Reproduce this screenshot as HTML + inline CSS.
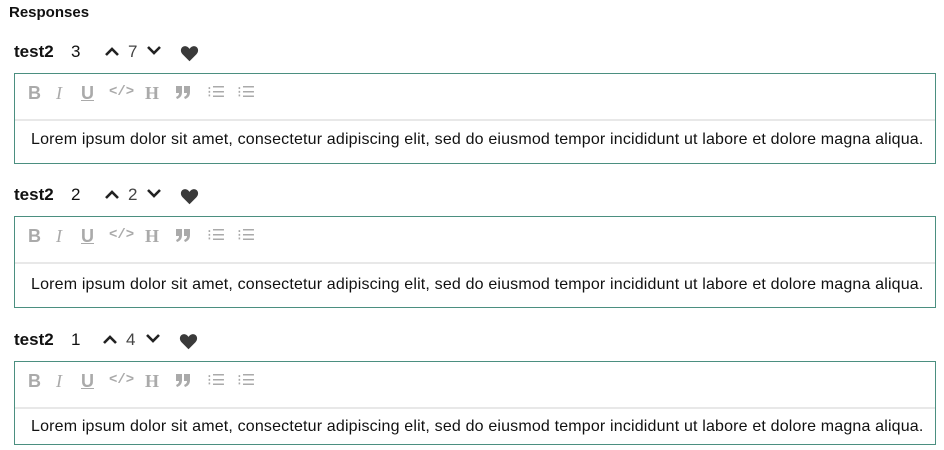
<!DOCTYPE html>
<html><head><style>
body{margin:0;width:944px;height:450px;background:#fff;font-family:"Liberation Sans",sans-serif;color:#111;position:relative;overflow:hidden}
.h{position:absolute;left:9px;top:4px;font-size:15px;font-weight:bold}
.row{position:absolute;left:0;width:944px;height:20px}
.row span{position:absolute;top:0;font-size:17px;line-height:20px}
.name{left:14px;font-weight:bold}
.box{position:absolute;left:14px;width:922px;border:1px solid #4b8f80;box-sizing:border-box}
.tb{position:absolute;left:0;top:0;right:0;height:45px;border-bottom:2px solid #e8e8e8}
.tb span{position:absolute;top:9px;font-size:18px;color:#aaa;font-weight:bold;font-family:"Liberation Serif",serif}
.txt{position:absolute;left:16px;font-size:16px;letter-spacing:0.17px;line-height:20px;color:#111;white-space:nowrap}
svg{position:absolute}
</style></head><body>
<div class="h">Responses</div>

<div class="row" style="top:42px">
<span class="name">test2</span><span style="left:71px">3</span>
<svg style="left:104px;top:3px" width="16" height="12" viewBox="0 0 16 12"><path d="M2 10L8 4l6 6" stroke="#222" stroke-width="2.6" fill="none"/></svg>
<span style="left:128px;color:#444">7</span>
<svg style="left:146px;top:2px" width="16" height="12" viewBox="0 0 16 12"><path d="M2 3l6 6 6-6" stroke="#222" stroke-width="2.6" fill="none"/></svg>
<svg style="left:180px;top:3px" width="19" height="17" viewBox="0 0 24 22"><path d="M12 21L3 12C0 9 0 4 4 2c3-1.5 6 0 8 3 2-3 5-4.5 8-3 4 2 4 7 1 10z" fill="#3a3a3a"/></svg>
</div>
<div class="box" style="top:73px;height:91px"><div class="tb">
<span style="left:13px;font-family:'Liberation Sans'">B</span><span style="left:41px;font-style:italic;font-weight:normal">I</span><span style="left:66px;text-decoration:underline;font-family:'Liberation Sans'">U</span><span style="left:94px;font-size:14px;top:10px;font-family:'Liberation Mono'">&lt;/&gt;</span><span style="left:130px">H</span>
<svg style="left:161px;top:12px" width="15" height="13" viewBox="0 0 15 13"><path d="M0 0h6v6c0 4-2 6-5 7l-1-2c2-1 3-2 3-4H0z M8 0h6v6c0 4-2 6-5 7l-1-2c2-1 3-2 3-4H8z" fill="#aaa"/></svg>
<span style="left:192px;font-size:15px;font-family:'Liberation Sans';font-weight:normal">⁝☰</span><span style="left:222px;font-size:15px;font-family:'Liberation Sans';font-weight:normal">⁝☰</span>
</div><div class="txt" style="top:56px">Lorem ipsum dolor sit amet, consectetur adipiscing elit, sed do eiusmod tempor incididunt ut labore et dolore magna aliqua.</div></div>

<div class="row" style="top:185px">
<span class="name">test2</span><span style="left:71px">2</span>
<svg style="left:104px;top:3px" width="16" height="12" viewBox="0 0 16 12"><path d="M2 10L8 4l6 6" stroke="#222" stroke-width="2.6" fill="none"/></svg>
<span style="left:128px;color:#444">2</span>
<svg style="left:146px;top:2px" width="16" height="12" viewBox="0 0 16 12"><path d="M2 3l6 6 6-6" stroke="#222" stroke-width="2.6" fill="none"/></svg>
<svg style="left:180px;top:3px" width="19" height="17" viewBox="0 0 24 22"><path d="M12 21L3 12C0 9 0 4 4 2c3-1.5 6 0 8 3 2-3 5-4.5 8-3 4 2 4 7 1 10z" fill="#3a3a3a"/></svg>
</div>
<div class="box" style="top:216px;height:92px"><div class="tb">
<span style="left:13px;font-family:'Liberation Sans'">B</span><span style="left:41px;font-style:italic;font-weight:normal">I</span><span style="left:66px;text-decoration:underline;font-family:'Liberation Sans'">U</span><span style="left:94px;font-size:14px;top:10px;font-family:'Liberation Mono'">&lt;/&gt;</span><span style="left:130px">H</span>
<svg style="left:161px;top:12px" width="15" height="13" viewBox="0 0 15 13"><path d="M0 0h6v6c0 4-2 6-5 7l-1-2c2-1 3-2 3-4H0z M8 0h6v6c0 4-2 6-5 7l-1-2c2-1 3-2 3-4H8z" fill="#aaa"/></svg>
<span style="left:192px;font-size:15px;font-family:'Liberation Sans';font-weight:normal">⁝☰</span><span style="left:222px;font-size:15px;font-family:'Liberation Sans';font-weight:normal">⁝☰</span>
</div><div class="txt" style="top:58px">Lorem ipsum dolor sit amet, consectetur adipiscing elit, sed do eiusmod tempor incididunt ut labore et dolore magna aliqua.</div></div>

<div class="row" style="top:330px">
<span class="name">test2</span><span style="left:71px">1</span>
<svg style="left:102px;top:3px" width="16" height="12" viewBox="0 0 16 12"><path d="M2 10L8 4l6 6" stroke="#222" stroke-width="2.6" fill="none"/></svg>
<span style="left:126px;color:#444">4</span>
<svg style="left:145px;top:2px" width="16" height="12" viewBox="0 0 16 12"><path d="M2 3l6 6 6-6" stroke="#222" stroke-width="2.6" fill="none"/></svg>
<svg style="left:179px;top:3px" width="19" height="17" viewBox="0 0 24 22"><path d="M12 21L3 12C0 9 0 4 4 2c3-1.5 6 0 8 3 2-3 5-4.5 8-3 4 2 4 7 1 10z" fill="#3a3a3a"/></svg>
</div>
<div class="box" style="top:361px;height:84px"><div class="tb">
<span style="left:13px;font-family:'Liberation Sans'">B</span><span style="left:41px;font-style:italic;font-weight:normal">I</span><span style="left:66px;text-decoration:underline;font-family:'Liberation Sans'">U</span><span style="left:94px;font-size:14px;top:10px;font-family:'Liberation Mono'">&lt;/&gt;</span><span style="left:130px">H</span>
<svg style="left:161px;top:12px" width="15" height="13" viewBox="0 0 15 13"><path d="M0 0h6v6c0 4-2 6-5 7l-1-2c2-1 3-2 3-4H0z M8 0h6v6c0 4-2 6-5 7l-1-2c2-1 3-2 3-4H8z" fill="#aaa"/></svg>
<span style="left:192px;font-size:15px;font-family:'Liberation Sans';font-weight:normal">⁝☰</span><span style="left:222px;font-size:15px;font-family:'Liberation Sans';font-weight:normal">⁝☰</span>
</div><div class="txt" style="top:55px">Lorem ipsum dolor sit amet, consectetur adipiscing elit, sed do eiusmod tempor incididunt ut labore et dolore magna aliqua.</div></div>
</body></html>
